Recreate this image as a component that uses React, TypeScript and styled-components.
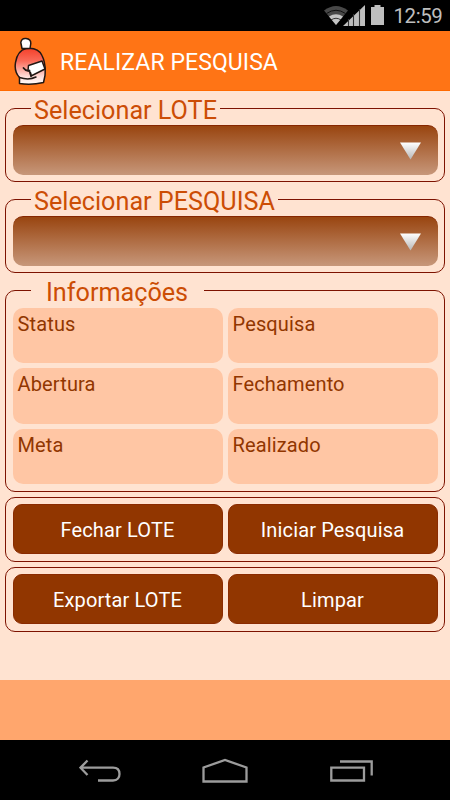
import React from "react";
import styled, { createGlobalStyle } from "styled-components";

const GlobalStyle = createGlobalStyle`
  * { box-sizing: border-box; }
  body { margin: 0; background: #000; font-family: Roboto, "Noto Sans", sans-serif; }
`;

const Screen = styled.div`
  width: 450px;
  height: 800px;
  display: flex;
  flex-direction: column;
  overflow: hidden;
  background: #000;
`;

const StatusBar = styled.div`
  height: 31px;
  flex: none;
  display: flex;
  align-items: flex-start;
  justify-content: flex-end;
  gap: 8px;
  padding: 4px 7.5px 0 0;
`;

const Clock = styled.span`
  color: #bebebe;
  font-size: 20.5px;
  line-height: 25px;
  letter-spacing: -0.4px;
`;

const TitleBar = styled.header`
  height: 60px;
  flex: none;
  display: flex;
  align-items: center;
  gap: 12px;
  padding-left: 12px;
  background: #ff7415;
  border-bottom: 1px solid #ff6a00;
`;

const Title = styled.h1`
  margin: 5px 0 0;
  color: #fff;
  font-size: 23px;
  line-height: 28px;
  font-weight: 400;
  letter-spacing: 0.08px;
  white-space: nowrap;
`;

const Content = styled.main`
  height: 589px;
  flex: none;
  padding: 17px 5px 0;
  background: #ffe3d1;
`;

const Panel = styled.section<{ $height: number; $gap: number }>`
  height: ${(p) => p.$height}px;
  margin-bottom: ${(p) => p.$gap}px;
  padding: 0 6.5px;
  border: 1px solid #7d1200;
  border-radius: 10px;
`;

const Legend = styled.h2<{ $indent?: number; $tail?: number }>`
  width: fit-content;
  height: 30px;
  margin: -14px 0 0 18.5px;
  padding: 0 ${(p) => p.$tail ?? 3}px 0 ${(p) => p.$indent ?? 3}px;
  background: #ffe3d1;
  color: #cc4d05;
  font-size: 25.2px;
  line-height: 31px;
  font-weight: 400;
  white-space: nowrap;
`;

const Select = styled.button`
  width: 100%;
  height: 50px;
  margin: 0;
  padding: 0 17px 0 0;
  display: flex;
  align-items: center;
  justify-content: flex-end;
  border: 0;
  border-top: 1px solid #862700;
  border-radius: 10px;
  background: linear-gradient(#994510, #c7977a);
`;

const Grid = styled.div<{ $top: number; $row: number }>`
  display: grid;
  grid-template-columns: 1fr 1fr;
  grid-auto-rows: ${(p) => p.$row}px;
  gap: 5px;
  margin-top: ${(p) => p.$top}px;
`;

const Cell = styled.div`
  padding: 4px 5px;
  border-radius: 10px;
  background: #ffc6a4;
  color: #913600;
  font-size: 20px;
  line-height: 25px;
  letter-spacing: 0.14px;
`;

const Action = styled.button`
  padding: 1px 0 0;
  border: 1px solid #8a2b00;
  border-radius: 9px;
  background: #913600;
  color: #fff;
  font-family: inherit;
  font-size: 20px;
  line-height: 24px;
  letter-spacing: 0.14px;
`;

const Footer = styled.footer`
  height: 60px;
  flex: none;
  background: #ffa66d;
`;

const NavBar = styled.nav`
  height: 60px;
  flex: none;
  display: flex;
  align-items: center;
  justify-content: space-between;
  padding: 2px 76px 0 79px;
`;

const StatusIcons = () => (
  <svg width="62" height="22" viewBox="324 4 62 22">
    <path d="M325 10.500Q337 1.500 349 10.500L337 25Z" fill="#484848" />
    <path d="M327.500 13.500Q337 7 346.500 13.500" fill="none" stroke="#111" strokeWidth="1" />
    <path d="M330 16.500Q337 12 344 16.500L337 25Z" fill="#c4c4c4" />
    <path d="M332 20Q337 16.500 342 20" fill="none" stroke="#111" strokeWidth=".8" />
    <path d="M344 26L366 5V26Z" fill="#bebebe" />
    <path d="M349.500 19V26M354.500 14V26M360.500 9V26" stroke="#333" strokeWidth="1.100" />
    <path d="M372 7H375.500V5H381.500V7H385V25H372Z" fill="#bebebe" />
  </svg>
);

const Logo = () => (
  <svg width="36" height="50" viewBox="12 36.500 36 50">
    <defs>
      <linearGradient id="robe" x1="0" y1="0" x2="0" y2="1">
        <stop offset="0" stopColor="#f4402a" />
        <stop offset=".35" stopColor="#fb6a58" />
        <stop offset=".8" stopColor="#ffe0dc" />
        <stop offset="1" stopColor="#fff" />
      </linearGradient>
    </defs>
    <g stroke="#211713" strokeWidth="1.500" strokeLinejoin="round" strokeLinecap="round">
      <path d="M19.500 78Q14 72 15.500 63Q17.500 51 26 49Q38 47.500 42 56Q46 64 45 76L43.500 83Q31 86 19.500 84Z" fill="url(#robe)" />
      <path d="M19.500 78Q29 81 36 77.500" fill="none" />
      <path d="M22 49L20.800 43Q21.500 38.500 26 39Q31 39.500 30.800 44L30 49Z" fill="#fff" />
      <path d="M28.500 66L42 61.500L45 69.500L31 76.500L30.500 73L28 71Z" fill="#fff" />
      <path d="M23.500 68.500Q26 72 29.500 71M30 73L31 76.500" fill="none" strokeWidth="1.800" />
    </g>
  </svg>
);

const Arrow = () => (
  <svg width="21" height="18" viewBox="0 0 21 18">
    <defs>
      <linearGradient id="arrow" x1="0" y1="0" x2="0" y2="1">
        <stop offset="0" stopColor="#fff" />
        <stop offset="1" stopColor="#b7b7b7" />
      </linearGradient>
    </defs>
    <path d="M0 .5H21L10.500 17.500Z" fill="url(#arrow)" />
  </svg>
);

const BackIcon = () => (
  <svg width="42" height="24" viewBox="79 760 42 24" fill="none" stroke="#9c9c9c" strokeWidth="2.300">
    <path d="M87.500 761.500L80.500 768.700L87.500 776M80.500 768.700H113C118 768.700 119.500 772 119.500 775C119.500 778.500 117.500 781.500 113 781.500H98" />
  </svg>
);

const HomeIcon = () => (
  <svg width="47" height="26" viewBox="202 758 47 26" fill="none" stroke="#9c9c9c" strokeWidth="2.300">
    <path d="M203.500 781.500V767.500L225 760L246.500 767.500V781.500Z" />
  </svg>
);

const RecentIcon = () => (
  <svg width="44" height="24" viewBox="330 760 44 24" fill="none" stroke="#9c9c9c" strokeWidth="2.300">
    <path d="M331.300 768.700H364V781.500H331.300ZM340 762.500H371.700V776.500" />
  </svg>
);

const fields = ["Status", "Pesquisa", "Abertura", "Fechamento", "Meta", "Realizado"];

export default function App() {
  return (
    <>
      <GlobalStyle />
      <Screen>
        <StatusBar>
          <StatusIcons />
          <Clock>12:59</Clock>
        </StatusBar>
        <TitleBar>
          <Logo />
          <Title>REALIZAR PESQUISA</Title>
        </TitleBar>
        <Content>
          <Panel $height={74} $gap={17}>
            <Legend>Selecionar LOTE</Legend>
            <Select aria-label="Selecionar LOTE"><Arrow /></Select>
          </Panel>
          <Panel $height={74} $gap={17}>
            <Legend>Selecionar PESQUISA</Legend>
            <Select aria-label="Selecionar PESQUISA"><Arrow /></Select>
          </Panel>
          <Panel $height={201.5} $gap={5.5}>
            <Legend $indent={15} $tail={16}>Informações</Legend>
            <Grid $top={0.5} $row={55.5}>
              {fields.map((f) => <Cell key={f}>{f}</Cell>)}
            </Grid>
          </Panel>
          <Panel $height={65} $gap={5}>
            <Grid $top={6} $row={50}>
              <Action>Fechar LOTE</Action>
              <Action>Iniciar Pesquisa</Action>
            </Grid>
          </Panel>
          <Panel $height={65} $gap={0}>
            <Grid $top={6} $row={50}>
              <Action>Exportar LOTE</Action>
              <Action>Limpar</Action>
            </Grid>
          </Panel>
        </Content>
        <Footer />
        <NavBar>
          <BackIcon />
          <HomeIcon />
          <RecentIcon />
        </NavBar>
      </Screen>
    </>
  );
}
